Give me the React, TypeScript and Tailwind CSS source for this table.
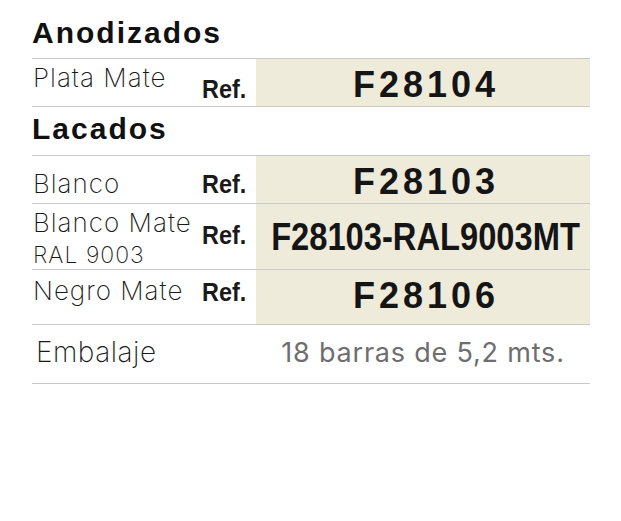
const HEAD = "font-['Liberation_Sans',Arial,sans-serif] font-bold text-[30px] leading-none tracking-[2px] text-[#111]";
const LABEL = "font-['Inter',sans-serif] font-extralight text-[26px] leading-none tracking-[1px] text-[#1a1a1a]";
const REF = "inline-block origin-left scale-x-[0.9] font-['Liberation_Sans',Arial,sans-serif] font-bold text-[26px] leading-none text-[#1a1a1a]";
const CODE = "font-['Liberation_Sans',Arial,sans-serif] font-bold text-[36px] leading-none tracking-[4px] text-[#151515]";

type Row = {
  label: React.ReactNode;
  code: string;
  h: string;
  labelPad: string;
  refPad: string;
  codePad: string;
  wide?: boolean;
};

function ColorRow({ row }: { row: Row }) {
  return (
    <div className={`flex border-b border-[#c9c9c9] ${row.h}`}>
      <div className={`w-[170px] pl-px flex items-center ${row.labelPad}`}>{row.label}</div>
      <div className={`w-[54px] flex items-center ${row.refPad}`}>
        <span className={REF}>Ref.</span>
      </div>
      <div className={`flex-1 min-w-0 bg-[#efebdb] flex items-center justify-center pl-[6px] ${row.codePad}`}>
        {row.wide ? (
          <span className="inline-block shrink-0 whitespace-nowrap scale-x-[0.86] font-['Liberation_Sans',Arial,sans-serif] font-bold text-[38px] leading-none text-[#151515]">
            {row.code}
          </span>
        ) : (
          <span className={CODE}>{row.code}</span>
        )}
      </div>
    </div>
  );
}

export default function App() {
  return (
    <div className="w-[621px] h-[521px] bg-white">
      <div className="ml-[32px] w-[558px]">
        {/* Anodizados */}
        <div className="h-[58px] pt-[18px]">
          <h2 className={HEAD}>Anodizados</h2>
        </div>
        <div className="border-t border-[#c9c9c9]">
          <ColorRow
            row={{
              label: <span className={LABEL}>Plata Mate</span>,
              code: "F28104",
              h: "h-[48px]",
              labelPad: "pb-[10px]",
              refPad: "pt-[12px]",
              codePad: "pt-[5px]",
            }}
          />
        </div>

        {/* Lacados */}
        <div className="h-[49px] pt-[7px] border-b border-[#c9c9c9]">
          <h2 className={HEAD}>Lacados</h2>
        </div>
        <ColorRow
          row={{
            label: <span className={LABEL}>Blanco</span>,
            code: "F28103",
            h: "h-[48px]",
            labelPad: "pt-[9px]",
            refPad: "pt-[8px]",
            codePad: "pt-[5px]",
          }}
        />
        <ColorRow
          row={{
            label: (
              <div className="self-start pt-[6px]">
                <div className={LABEL}>Blanco Mate</div>
                <div className="mt-[8px] font-['Inter',sans-serif] font-extralight text-[23px] leading-none tracking-[1px] text-[#1a1a1a]">RAL 9003</div>
              </div>
            ),
            code: "F28103-RAL9003MT",
            h: "h-[66px]",
            labelPad: "",
            refPad: "pb-[4px]",
            codePad: "",
            wide: true,
          }}
        />
        <ColorRow
          row={{
            label: <span className={LABEL}>Negro Mate</span>,
            code: "F28106",
            h: "h-[55px]",
            labelPad: "pb-[13px]",
            refPad: "pb-[10px]",
            codePad: "pb-[3px]",
          }}
        />

        {/* Embalaje */}
        <div className="flex h-[59px] border-b border-[#c9c9c9]">
          <div className="w-[224px] pl-[4px] pb-[5px] flex items-center">
            <span className="font-['Inter',sans-serif] font-extralight text-[28px] leading-none tracking-[0.5px] text-[#1a1a1a]">Embalaje</span>
          </div>
          <div className="flex-1 pb-[4px] flex items-center justify-center">
            <span className="font-['Inter',sans-serif] font-normal text-[27px] leading-none tracking-[0.8px] text-[#6e6e6e]">
              18 barras de 5,2 mts.
            </span>
          </div>
        </div>
      </div>
    </div>
  );
}
